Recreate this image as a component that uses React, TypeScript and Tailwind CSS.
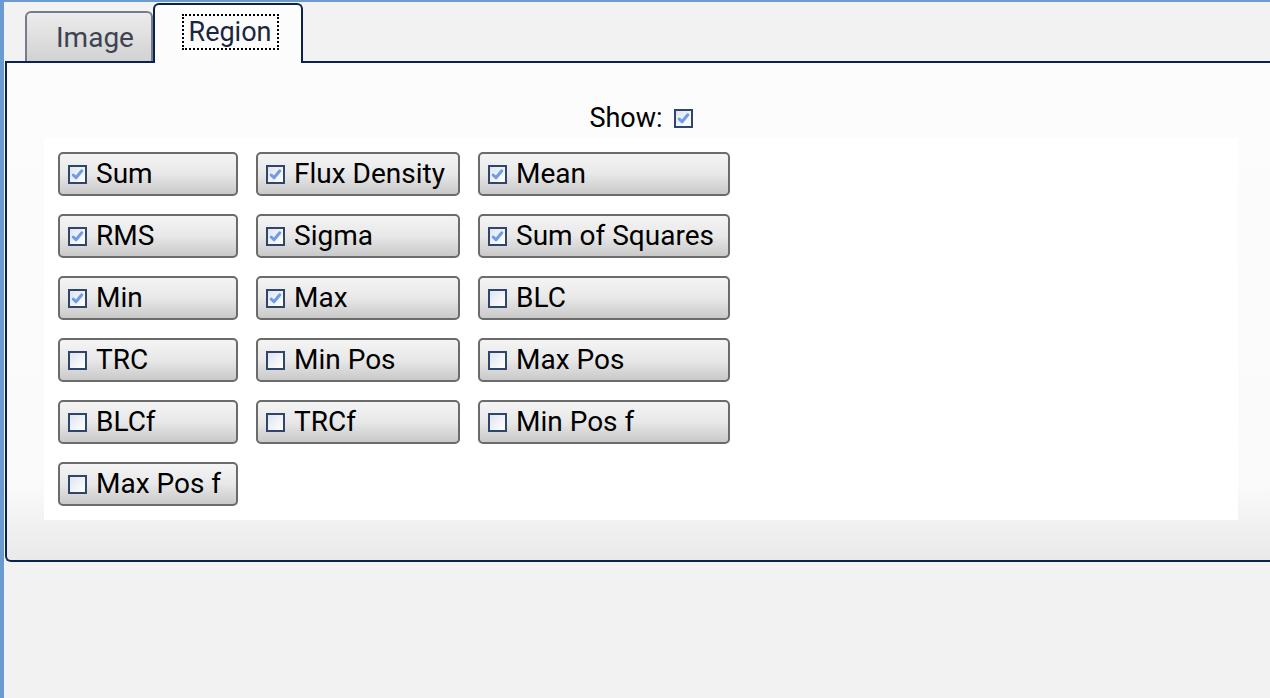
import React from 'react';

const rows: [string, boolean][][] = [
  [['Sum', true], ['Flux Density', true], ['Mean', true]],
  [['RMS', true], ['Sigma', true], ['Sum of Squares', true]],
  [['Min', true], ['Max', true], ['BLC', false]],
  [['TRC', false], ['Min Pos', false], ['Max Pos', false]],
  [['BLCf', false], ['TRCf', false], ['Min Pos f', false]],
  [['Max Pos f', false]],
];

const widths = ['w-[180px]', 'w-[204px]', 'w-[252px]'];

function Check({ on }: { on: boolean }) {
  return (
    <span className="inline-flex h-[19px] w-[19px] shrink-0 items-center justify-center border-2 border-[#30456b] bg-gradient-to-br from-[#dfe5ee] to-white">
      {on && (
        <svg width="13" height="13" viewBox="0 0 13 13">
          <path d="M2.2 7 L5 9.8 L10.8 2.8" fill="none" stroke="#4f86e3" strokeWidth="3" strokeLinecap="round" strokeLinejoin="round" opacity="0.8" />
        </svg>
      )}
    </span>
  );
}

function StatButton({ label, on, w }: { label: string; on: boolean; w: string }) {
  return (
    <div className={`${w} flex h-[44px] items-center gap-[9px] rounded-[5px] border-2 border-[#6b6b6b] bg-gradient-to-b from-[#f4f4f4] via-[#e8e8e8] to-[#c9c9c9] pl-[8px] text-[28px] text-black`}>
      <Check on={on} />
      <span className="leading-none">{label}</span>
    </div>
  );
}

export default function App() {
  return (
    <div className="h-[698px] overflow-hidden border-l-4 border-t-2 border-[#6a9bd0] bg-[#f2f2f2] font-['Roboto',sans-serif]">
      <div className="pl-[1px] pt-[1px]">
        <div className="relative z-10 flex h-[58px] items-end pl-[20px]">
          <div className="flex h-[50px] w-[128px] items-center justify-center rounded-t-[6px] border-2 border-b-0 border-[#767c8b] bg-gradient-to-b from-[#ececec] to-[#d2d2d2] pl-[12px] pt-[2px] text-[28px] text-[#3d4352]">
            Image
          </div>
          <div className="-mb-[2px] flex h-[60px] w-[150px] items-start justify-center rounded-t-[6px] border-2 border-b-0 border-[#0b2150] bg-[#fcfcfc] pl-[4px] pt-[9px] text-[27px] text-[#1b2640]">
            <span className="border-2 border-dotted border-black px-[5px] leading-[32px]">Region</span>
          </div>
        </div>
        <div className="h-[501px] w-[1300px] rounded-bl-[6px] border-2 border-r-0 border-[#0b2150] bg-gradient-to-b from-[#fcfcfc] via-[#fafafa] via-[85%] to-[#e9e9e9]">
          <div className="w-[1268px]">
            <div className="flex h-[75px] items-end justify-center pb-[6px]">
              <div className="flex h-[28px] items-center gap-[11px] text-[27px] text-black">
                <span>Show:</span>
                <Check on />
              </div>
            </div>
            <div className="ml-[37px] flex w-[1194px] flex-col gap-[18px] bg-white p-[14px]">
              {rows.map((row, i) => (
                <div key={i} className="flex gap-[18px]">
                  {row.map(([label, on], j) => (
                    <StatButton key={label} label={label} on={on} w={widths[j]} />
                  ))}
                </div>
              ))}
            </div>
          </div>
        </div>
      </div>
    </div>
  );
}
